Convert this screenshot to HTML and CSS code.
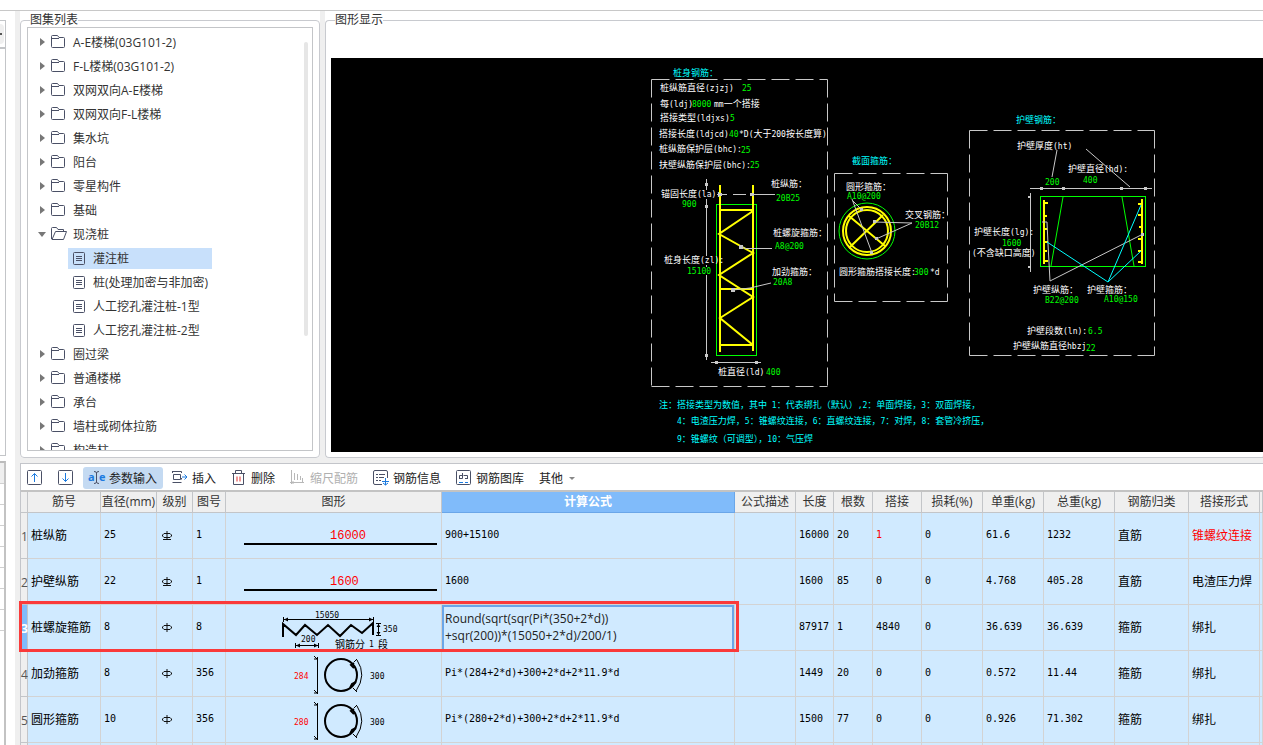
FILE: index.html
```html
<!DOCTYPE html>
<html lang="zh-CN">
<head>
    <meta charset="UTF-8">
    <meta name="viewport" content="width=device-width, initial-scale=1.0">
    <title>钢筋参数输入</title>
    <link rel="stylesheet" href="styles.css">
</head>
<body>
    <div class="topbar"></div>
    <div class="app">
        <aside class="dock">
            <div class="dock_head"><button class="dock_btn" aria-label="展开"></button></div>
            <div class="dock_body"></div>
            <div class="dock_grid">
                <i></i><i></i><i></i><i></i><i></i><i></i><i></i><i></i>
            </div>
        </aside>

        <main class="work">
            <div class="upper">
                <section class="panel list_panel">
                    <fieldset>
                        <legend>图集列表</legend>
                        <div class="tree_box">
                            <ul class="tree">
                                <li><button class="node"><svg class="folder"><use href="#i-folder"/></svg>A-E楼梯(03G101-2)</button></li>
                                <li><button class="node"><svg class="folder"><use href="#i-folder"/></svg>F-L楼梯(03G101-2)</button></li>
                                <li><button class="node"><svg class="folder"><use href="#i-folder"/></svg>双网双向A-E楼梯</button></li>
                                <li><button class="node"><svg class="folder"><use href="#i-folder"/></svg>双网双向F-L楼梯</button></li>
                                <li><button class="node"><svg class="folder"><use href="#i-folder"/></svg>集水坑</button></li>
                                <li><button class="node"><svg class="folder"><use href="#i-folder"/></svg>阳台</button></li>
                                <li><button class="node"><svg class="folder"><use href="#i-folder"/></svg>零星构件</button></li>
                                <li><button class="node"><svg class="folder"><use href="#i-folder"/></svg>基础</button></li>
                                <li>
                                    <button class="node open"><svg class="folder"><use href="#i-open"/></svg>现浇桩</button>
                                    <ul class="leaves">
                                        <li><button class="leaf selected"><svg><use href="#i-doc"/></svg>灌注桩</button></li>
                                        <li><button class="leaf"><svg><use href="#i-doc"/></svg>桩(处理加密与非加密)</button></li>
                                        <li><button class="leaf"><svg><use href="#i-doc"/></svg>人工挖孔灌注桩-1型</button></li>
                                        <li><button class="leaf"><svg><use href="#i-doc"/></svg>人工挖孔灌注桩-2型</button></li>
                                    </ul>
                                </li>
                                <li><button class="node"><svg class="folder"><use href="#i-folder"/></svg>圈过梁</button></li>
                                <li><button class="node"><svg class="folder"><use href="#i-folder"/></svg>普通楼梯</button></li>
                                <li><button class="node"><svg class="folder"><use href="#i-folder"/></svg>承台</button></li>
                                <li><button class="node"><svg class="folder"><use href="#i-folder"/></svg>墙柱或砌体拉筋</button></li>
                                <li><button class="node"><svg class="folder"><use href="#i-folder"/></svg>构造柱</button></li>
                            </ul>
                            <div class="scroll"></div>
                        </div>
                    </fieldset>
                </section>

                <section class="panel view_panel">
                    <fieldset>
                        <legend>图形显示</legend>
                        <div class="canvas">
                            <svg class="cad" viewBox="331 58 932 394">
                                <!-- 虚线框 -->
                                <g class="dash">
                                    <path d="M651.5 79.5H827.5M651.5 79.5V386.5M827.5 79.5V386.5M651.5 386.5H827.5"/>
                                    <path d="M834.5 173.5H947.5M834.5 173.5V301.5M947.5 173.5V301.5M834.5 301.5H947.5"/>
                                    <path d="M969.5 130.5H1154.5M969.5 130.5V355.5M1154.5 130.5V355.5M969.5 355.5H1154.5"/>
                                </g>

                                <!-- 桩身 -->
                                <g class="gl">
                                    <rect x="716.5" y="204.5" width="40" height="151"/>
                                </g>
                                <g class="yl">
                                    <path d="M720 185V352M753 185V351M720 210H753M720 289H753M720 345H753"/>
                                    <path d="M753 211L719 234L753 253L719 275L753 297L720 318L753 345"/>
                                </g>
                                <g class="wl">
                                    <path d="M706.5 179V190M706.5 199V256M706.5 265V267M706.5 275V360M711 362.5H761"/>
                                    <path d="M717 194.5H727M733 194.5H746M752 194.5H775M741 247L746 248.500H772M733 290L750 288L771 283"/>
                                </g>
                                <g class="dot">
                                    <path d="M705 183h3v3h-3zM705 205h3v3h-3zM705 354h3v3h-3zM715 361h3v3h-3zM755 361h3v3h-3zM718 193h4v3h-4zM750 193h4v3h-4zM739 245h4v4h-4zM731 288h4v4h-4z"/>
                                </g>
                                <g class="ct">
                                    <text x="673" y="76">桩身钢筋：</text>
                                </g>
                                <g class="wt">
                                    <text x="660" y="91">桩纵筋直径<tspan>(zjzj)</tspan></text>
                                    <text x="660" y="107">每<tspan>(ldj)</tspan></text>
                                    <text x="714" y="107"><tspan>mm</tspan>一个搭接</text>
                                    <text x="660" y="121">搭接类型<tspan>(ldjxs)</tspan></text>
                                    <text x="659" y="137">搭接长度<tspan>(ldjcd)</tspan></text>
                                    <text x="739" y="137"><tspan>*D(</tspan>大于<tspan>200</tspan>按长度算<tspan>)</tspan></text>
                                    <text x="659" y="152">桩纵筋保护层<tspan>(bhc):</tspan></text>
                                    <text x="659" y="168">扶壁纵筋保护层<tspan>(bhc):</tspan></text>
                                    <text x="661" y="197">锚固长度<tspan>(la):</tspan></text>
                                    <text x="771" y="187">桩纵筋：</text>
                                    <text x="773" y="236">桩螺旋箍筋：</text>
                                    <text x="772" y="275">加劲箍筋：</text>
                                    <text x="664" y="263">桩身长度<tspan>(zl):</tspan></text>
                                    <text x="718" y="375">桩直径<tspan>(ld)</tspan></text>
                                </g>
                                <g class="gt">
                                    <text x="742" y="91">25</text>
                                    <text x="692" y="107">8000</text>
                                    <text x="730" y="121">5</text>
                                    <text x="729" y="137">40</text>
                                    <text x="741" y="153">25</text>
                                    <text x="750" y="168">25</text>
                                    <text x="682" y="207">900</text>
                                    <text x="776" y="201">20B25</text>
                                    <text x="775" y="249">A8@200</text>
                                    <text x="773" y="285">20A8</text>
                                    <text x="687" y="274">15100</text>
                                    <text x="766" y="375">400</text>
                                </g>

                                <!-- 截面 -->
                                <circle class="gl" cx="867" cy="231" r="28"/>
                                <g class="yl">
                                    <circle cx="867" cy="231" r="24"/>
                                    <circle cx="867" cy="231" r="21"/>
                                    <path d="M849 216L885 246M849 248L883 215"/>
                                </g>
                                <g class="wl">
                                    <path d="M852 199L872 253M912 223L874 222M912 223L876 239M853 201L862 210"/>
                                </g>
                                <g class="dot">
                                    <path d="M860 208h3v3h-3zM873 220h3v3h-3zM875 237h3v3h-3zM870 251h3v3h-3z"/>
                                </g>
                                <text class="ct" x="852" y="164">截面箍筋：</text>
                                <g class="wt">
                                    <text x="846" y="190">圆形箍筋：</text>
                                    <text x="905" y="218">交叉钢筋：</text>
                                    <text x="839" y="275">圆形箍筋搭接长度<tspan>:</tspan></text>
                                    <text x="930" y="275"><tspan>*d</tspan></text>
                                </g>
                                <g class="gt">
                                    <text x="847" y="199">A10@200</text>
                                    <text x="915" y="228">20B12</text>
                                    <text x="914" y="275">300</text>
                                </g>

                                <!-- 护壁 -->
                                <g class="gl">
                                    <rect x="1040.5" y="196.500" width="105" height="70"/>
                                    <path d="M1063 197L1051 266M1122 197L1134 266"/>
                                </g>
                                <g class="yl">
                                    <path d="M1044 200V264M1142 199V264"/>
                                    <path d="M1044 203H1048M1044 216H1047M1044 229H1047M1044 242H1048M1044 251H1047M1044 261H1048"/>
                                    <path d="M1142 204H1138M1142 215H1138M1142 227H1139M1142 239H1138M1142 251H1138M1142 262H1138"/>
                                </g>
                                <g class="wl">
                                    <path d="M1030 188.5H1152M1030.5 193V272M1057 150L1052 177M1086 149L1130 187"/>
                                    <path d="M1042 222H1047L1048 244L1050 281L1143 234"/>
                                </g>
                                <g class="dot">
                                    <path d="M1040 187h3v3h-3zM1062 187h3v3h-3zM1120 187h3v3h-3zM1144 187h3v3h-3zM1028 196h3v2h-3zM1028 266h3v2h-3zM1141 233h3v3h-3z"/>
                                </g>
                                <path class="cl" d="M1047 242L1108 282L1141 205M1108 282L1141 251"/>
                                <text class="ct" x="1016" y="123">护壁钢筋：</text>
                                <g class="wt">
                                    <text x="1017" y="149">护壁厚度<tspan>(ht)</tspan></text>
                                    <text x="1068" y="172">护壁直径<tspan>(hd):</tspan></text>
                                    <text x="974" y="235">护壁长度<tspan>(lg):</tspan></text>
                                    <text x="972" y="256"><tspan>(</tspan>不含缺口高度<tspan>)</tspan></text>
                                    <text x="1033" y="293">护壁纵筋：</text>
                                    <text x="1087" y="293">护壁箍筋：</text>
                                    <text x="1027" y="334">护壁段数<tspan>(ln):</tspan></text>
                                    <text x="1013" y="349">护壁纵筋直径<tspan>hbzj</tspan></text>
                                </g>
                                <g class="gt">
                                    <text x="1045" y="185">200</text>
                                    <text x="1083" y="183">400</text>
                                    <text x="1002" y="246">1600</text>
                                    <text x="1045" y="303">B22@200</text>
                                    <text x="1104" y="302">A10@150</text>
                                    <text x="1088" y="334">6.5</text>
                                    <text x="1086" y="351">22</text>
                                </g>

                                <!-- 附注 -->
                                <g class="ct">
                                    <text x="659" y="408">注：搭接类型为数值，其中<tspan> 1</tspan>：代表绑扎（默认）<tspan>,2</tspan>：单面焊接，<tspan>3</tspan>：双面焊接，</text>
                                    <text x="677" y="424"><tspan>4</tspan>：电渣压力焊，<tspan>5</tspan>：锥螺纹连接，<tspan>6</tspan>：直螺纹连接，<tspan>7</tspan>：对焊，<tspan>8</tspan>：套管冷挤压，</text>
                                    <text x="677" y="442"><tspan>9</tspan>：锥螺纹（可调型），<tspan>10</tspan>：气压焊</text>
                                </g>
                            </svg>
                        </div>
                    </fieldset>
                </section>
            </div>

            <section class="lower">
                <div class="toolbar">
                    <button aria-label="上移"><svg viewBox="0 0 16 16"><rect class="ink" x="0.5" y="0.5" width="14" height="14" rx="1"/><path class="blue" d="M7.5 12V3.500M4.500 6.500L7.500 3.500L10.500 6.500"/></svg></button>
                    <button aria-label="下移"><svg viewBox="0 0 16 16"><rect class="ink" x="0.5" y="0.5" width="14" height="14" rx="1"/><path class="blue" d="M7.5 3V11.500M4.500 8.500L7.500 11.500L10.500 8.500"/></svg></button>
                    <button class="active"><svg viewBox="0 0 16 16"><text class="ae" x="-1" y="11">a</text><text class="ae" x="10" y="11">e</text><path class="ink" d="M5 1.500Q7.500 1.500 7.500 3V12Q7.500 13.500 5 13.500M10 1.500Q7.500 1.500 7.500 3M7.500 12Q7.500 13.500 10 13.500"/></svg>参数输入</button>
                    <button><svg viewBox="0 0 16 16"><path class="ink" d="M9.500 1.500H0.500M9.500 1.500V3M9.500 8V9.500M0.500 12.500H9.500M0.500 1V3M1.500 4.500H8.500V9.500H1.500Z"/><path class="blue" d="M10 7H15M12.500 4.500L15 7L12.500 9.500"/></svg>插入</button>
                    <button><svg viewBox="0 0 16 16"><path class="ink" d="M1 3.500H14M4.500 3V0.500H10.500V3M2.500 4V14.500H12.500V4"/><path class="red" d="M6 6.500V11.500M9 6.500V11.500"/></svg>删除</button>
                    <button disabled><svg viewBox="0 0 16 16"><path class="ink" d="M1.500 0V14M4.500 3V10M7.500 4V10M10.500 6V10M12.500 8V12M0 12.500H14M3 11V14"/></svg>缩尺配筋</button>
                    <button><svg viewBox="0 0 16 16"><path class="ink" d="M9 14.500H2Q0.500 14.500 0.500 13V2Q0.500 0.500 2 0.500H13Q14.500 0.500 14.500 2V8M3 4.500H5M6 4.500H12M3 7.500H5M6 7.500H11M3 10.500H5M6 10.500H8"/><path class="blue" d="M12.500 8V15M9 11.500H16M10 13L12.500 15L15 13"/></svg>钢筋信息</button>
                    <button><svg viewBox="0 0 16 16"><rect class="ink" x="0.5" y="0.5" width="14" height="14" rx="1"/><path class="ink" d="M3.500 8.500V5.500H7M6.500 3V8.500H3M7.500 5.500H11.500V9M9 8.500H11"/><path class="blue" d="M3 12.500H7M9 12.500H12"/></svg>钢筋图库</button>
                    <button>其他<span class="caret"></span></button>
                </div>

                <table class="bars">
                    <colgroup>
                        <col class="c_no"><col class="c_name"><col class="c_dia"><col class="c_grade"><col class="c_fig">
                        <col class="c_shape"><col><col class="c_desc"><col class="c_len"><col class="c_qty">
                        <col class="c_lap"><col class="c_kg"><col class="c_kg"><col class="c_sum"><col class="c_kind">
                        <col class="c_joint"><col class="c_end">
                    </colgroup>
                    <thead>
                        <tr>
                            <th></th><th>筋号</th><th>直径(mm)</th><th>级别</th><th>图号</th><th>图形</th>
                            <th class="current">计算公式</th><th>公式描述</th><th>长度</th><th>根数</th><th>搭接</th>
                            <th>损耗(%)</th><th>单重(kg)</th><th>总重(kg)</th><th>钢筋归类</th><th>搭接形式</th><th></th>
                        </tr>
                    </thead>
                    <tbody>
                        <tr>
                            <th>1</th><td class="cn">桩纵筋</td><td>25</td>
                            <td><svg class="grade"><use href="#i-grade2"/></svg></td><td>1</td>
                            <td class="shape"><svg viewBox="0 0 215 45"><text class="big" x="104" y="26">16000</text><path class="bar" d="M18 31H211"/></svg></td>
                            <td>900+15100</td><td></td><td>16000</td><td>20</td><td class="warn">1</td><td>0</td><td>61.6</td><td>1232</td>
                            <td class="cn">直筋</td><td class="cn warn">锥螺纹连接</td><td></td>
                        </tr>
                        <tr>
                            <th>2</th><td class="cn">护壁纵筋</td><td>22</td>
                            <td><svg class="grade"><use href="#i-grade2"/></svg></td><td>1</td>
                            <td class="shape"><svg viewBox="0 0 215 45"><text class="big" x="104" y="26">1600</text><path class="bar" d="M18 31H211"/></svg></td>
                            <td>1600</td><td></td><td>1600</td><td>85</td><td>0</td><td>0</td><td>4.768</td><td>405.28</td>
                            <td class="cn">直筋</td><td class="cn">电渣压力焊</td><td></td>
                        </tr>
                        <tr class="editing">
                            <th>3<span class="mark"></span></th><td class="cn">桩螺旋箍筋</td><td>8</td>
                            <td><svg class="grade"><use href="#i-grade1"/></svg></td><td>8</td>
                            <td class="shape">
                                <svg viewBox="0 0 215 45">
                                    <path class="bar" d="M57 32V19L70 30L79 20L91 30L102 20L114 31L125 20L136 28L147 18V30"/>
                                    <path class="dim" d="M57.500 12V17M147.500 12V17M58 14.500H147M150 18.500H155M150 30.500H155M152.500 18V31M69.500 38V43M92.500 38V43M70 40.500H92"/>
                                    <path d="M58 14.500l4-2v4zM147 14.500l-4-2v4zM70 40.500l4-2v4zM92 40.500l-4-2v4zM152.500 19l2 3h-4zM152.500 30l2-3h-4z"/>
                                    <text x="89" y="13">15050</text>
                                    <text x="157" y="27">350</text>
                                    <text x="75" y="37">200</text>
                                    <text class="zh" x="109" y="43">钢筋分</text>
                                    <text x="143" y="42">1</text>
                                    <text class="zh" x="152" y="43">段</text>
                                </svg>
                            </td>
                            <td class="edit"><textarea aria-label="计算公式" spellcheck="false">Round(sqrt(sqr(Pi*(350+2*d))
+sqr(200))*(15050+2*d)/200/1)</textarea></td>
                            <td></td><td>87917</td><td>1</td><td>4840</td><td>0</td><td>36.639</td><td>36.639</td>
                            <td class="cn">箍筋</td><td class="cn">绑扎</td><td></td>
                        </tr>
                        <tr>
                            <th>4</th><td class="cn">加劲箍筋</td><td>8</td>
                            <td><svg class="grade"><use href="#i-grade1"/></svg></td><td>356</td>
                            <td class="shape"><svg viewBox="0 0 215 45"><use href="#i-hoop" width="215" height="45"/><text class="warn" x="68" y="28">284</text><text x="144" y="28">300</text></svg></td>
                            <td>Pi*(284+2*d)+300+2*d+2*11.9*d</td><td></td><td>1449</td><td>20</td><td>0</td><td>0</td><td>0.572</td><td>11.44</td>
                            <td class="cn">箍筋</td><td class="cn">绑扎</td><td></td>
                        </tr>
                        <tr>
                            <th>5</th><td class="cn">圆形箍筋</td><td>10</td>
                            <td><svg class="grade"><use href="#i-grade1"/></svg></td><td>356</td>
                            <td class="shape"><svg viewBox="0 0 215 45"><use href="#i-hoop" width="215" height="45"/><text class="warn" x="68" y="28">280</text><text x="144" y="28">300</text></svg></td>
                            <td>Pi*(280+2*d)+300+2*d+2*11.9*d</td><td></td><td>1500</td><td>77</td><td>0</td><td>0</td><td>0.926</td><td>71.302</td>
                            <td class="cn">箍筋</td><td class="cn">绑扎</td><td></td>
                        </tr>
                        <tr class="blank">
                            <th></th><td></td><td></td><td></td><td></td><td></td><td></td><td></td><td></td>
                            <td></td><td></td><td></td><td></td><td></td><td></td><td></td><td></td>
                        </tr>
                    </tbody>
                </table>
            </section>
        </main>
    </div>

    <svg class="defs">
        <symbol id="i-folder" viewBox="0 0 16 14"><path class="ink" d="M0.500 11.500V1.500Q0.500 0.500 1.500 0.500H6.500L8 2.500H12.500Q13.500 2.500 13.500 3.500V11.500Q13.500 12.500 12.500 12.500H1.500Q0.500 12.500 0.500 11.500M0.500 3.500H8"/></symbol>
        <symbol id="i-open" viewBox="0 0 16 14"><path class="ink" d="M0.500 12V1.500Q0.500 0.500 1.500 0.500H5.500L7 2.500H12.500V4.500M1 12.500L4.500 4.500H15.500L12.500 12.500Z"/></symbol>
        <symbol id="i-doc" viewBox="0 0 13 13"><rect class="ink" x="0.500" y="0.500" width="11" height="12" rx="1"/><path class="ink" d="M3 4.500H9M3 6.500H9M3 8.500H9"/></symbol>
        <symbol id="i-grade1" viewBox="0 0 10 10"><path class="dark" d="M2 2.500H8L9.500 4V5L8 6.500H2L0.500 5V4ZM5 0V9"/></symbol>
        <symbol id="i-grade2" viewBox="0 0 10 10"><path class="dark" d="M2 2.500H8L9.500 4V5L8 6.500H2L0.500 5V4ZM5 0V9M1 8.500H9"/></symbol>
        <symbol id="i-hoop" viewBox="0 0 215 45">
            <circle class="bar" cx="115" cy="24" r="16"/>
            <path class="dim" d="M91.500 6V43M88 5L91.500 8.500M91.500 8H88M88 39L91.500 42.500M91.500 42H88M131 9Q141 24 130 40M128 11L131 8M127 37L131 41"/>
            <path class="bar" d="M128 17L125 14L128 12M130 31L126 33L124 37"/>
        </symbol>
    </svg>
</body>
</html>
```
FILE: styles.css
```css
* {
    box-sizing: border-box;
}
body {
    margin: 0;
    height: 100vh;
    overflow: hidden;
    display: flex;
    flex-direction: column;
    background-color: #fff;
    color: #333;
    font-family: "Open Sans", "Noto Sans CJK SC", sans-serif;
    font-size: 12px;
}
button {
    margin: 0;
    padding: 0;
    border: 0;
    background: none;
    color: inherit;
    font: inherit;
    white-space: nowrap;
}
ul {
    margin: 0;
    padding: 0;
    list-style: none;
}
.topbar {
    flex: none;
    height: 11px;
    border-bottom: 1px solid #c8c8c8;
}
.app {
    flex: 1;
    min-height: 0;
    display: flex;
}

/* 左侧停靠栏 */
.dock {
    flex: none;
    width: 15px;
    padding-top: 9px;
    display: flex;
    flex-direction: column;
}
.dock_head {
    width: 6px;
    height: 29px;
    padding: 3px 1px 3px 0;
    border: 1px solid #c3c5c8;
    border-left: 0;
    border-bottom-width: 2px;
}
.dock_btn {
    display: block;
    width: 4px;
    height: 20px;
    border-radius: 0 4px 4px 0;
    background: linear-gradient(#555, #555) no-repeat 0 9px / 2px 2px #efefef;
}
.dock_body {
    width: 6px;
    height: 407px;
    border-right: 1px solid #c3c5c8;
    border-bottom: 1px solid #c3c5c8;
}
.dock_grid {
    flex: 1;
    width: 6px;
    margin-top: 5px;
    border-top: 2px solid #bbb;
    border-right: 2px solid #c3c3c3;
}
.dock_grid i {
    display: block;
    height: 21px;
    border-bottom: 1px solid #d0d0d0;
}
.dock_grid i:first-child {
    background-color: #efefef;
}

.work {
    flex: 1;
    min-width: 0;
    padding-left: 5px;
    display: flex;
    flex-direction: column;
    gap: 5px;
    background-color: #efefef;
}
.upper {
    flex: 0 0 60vh;
    min-height: 0;
    display: flex;
    gap: 5px;
}
.panel {
    display: flex;
    min-height: 0;
    padding-top: 2px;
    border-radius: 0 0 4px 4px;
    background-color: #fff;
}
.list_panel {
    flex: none;
    width: 300px;
}
.view_panel {
    flex: 1;
    min-width: 0;
}
fieldset {
    flex: 1;
    min-width: 0;
    min-height: 0;
    margin: 0;
    padding: 0 6px 6px;
    border: 1px solid #c8cacf;
    border-radius: 4px;
    display: flex;
}
legend {
    margin-left: 3px;
    padding: 0;
    line-height: 14px;
}
.view_panel fieldset {
    padding: 31px 0 5px 5px;
    border-right: 0;
    border-radius: 4px 0 0 4px;
}
.view_panel legend {
    margin-left: 4px;
}

/* 图集树 */
.tree_box {
    flex: 1;
    min-width: 0;
    padding: 2px 4px 0 0;
    border: 1px solid #c3c5c8;
    display: flex;
    overflow: hidden;
}
.tree {
    flex: 1;
}
.tree li {
    min-height: 24px;
}
.tree svg {
    flex: none;
}
.node {
    display: flex;
    align-items: center;
    height: 24px;
    padding-left: 12px;
}
.node::before {
    content: "";
    width: 0;
    margin-right: 6px;
    border: solid transparent;
    border-width: 4px 0 4px 5px;
    border-left-color: #777;
}
.node.open::before {
    margin-left: -2px;
    margin-right: 5px;
    border-width: 5px 4px 0;
    border-color: #777 transparent;
}
.folder {
    width: 16px;
    height: 14px;
    margin-right: 6px;
}
.leaves {
    width: fit-content;
    margin-left: 40px;
}
.leaves li {
    display: flex;
    align-items: center;
}
.leaf {
    flex: 1;
    display: flex;
    align-items: center;
    height: 21px;
    padding: 0 4px 0 5px;
}
.leaf svg {
    width: 13px;
    height: 13px;
    margin-right: 7px;
}
.leaf.selected {
    background-color: #c8e0fb;
}
.leaf.selected .ink {
    stroke: #2f5f98;
}
.scroll {
    width: 4px;
    height: 70%;
    margin-top: 12px;
    border-radius: 2px;
    background-color: #e6e6e6;
}

/* 图形显示 */
.canvas {
    flex: 1;
    min-width: 0;
    min-height: 0;
    display: flex;
    background-color: #000;
}
.cad {
    width: 100%;
    height: 100%;
    fill: none;
}
.cad text {
    font-family: "Noto Sans CJK SC", sans-serif;
    font-size: 9px;
    white-space: pre;
}
.cad tspan,
.cad .gt text {
    font-family: "DejaVu Sans Mono", monospace;
    font-size: 8px;
}
.dash {
    stroke: #c8c8c8;
    stroke-dasharray: 18 6;
}
.gl {
    stroke: #00ff00;
}
.yl {
    stroke: #ffff00;
    stroke-width: 2px;
}
.wl {
    stroke: #c8c8c8;
}
.cl {
    stroke: #00ffff;
}
.dot {
    fill: #c8c8c8;
}
.wt {
    fill: #fff;
}
.gt {
    fill: #00ff00;
}
.ct {
    fill: #00ffff;
}

/* 工具栏 */
.lower {
    flex: 1;
    min-width: 0;
    min-height: 0;
    border-top: 1px solid #c3c5ca;
    border-left: 1px solid #c3c5ca;
    background-color: #fff;
}
.toolbar {
    height: 28px;
    padding-top: 3px;
    border-bottom: 2px solid #c3c3c3;
    display: flex;
    align-items: flex-start;
    gap: 3px;
}
.toolbar button {
    display: flex;
    align-items: center;
    gap: 4px;
    height: 22px;
    padding: 0 6px;
    border-radius: 3px;
    color: #222;
}
.toolbar svg {
    width: 16px;
    height: 16px;
    overflow: visible;
}
.toolbar .active {
    background-color: #c4daf2;
}
.toolbar button:disabled {
    color: #b0b0b0;
}
.toolbar button:disabled .ink {
    stroke: #b8b8b8;
}
.caret {
    margin-left: 2px;
    border: solid transparent;
    border-width: 3px 3px 0;
    border-top-color: #888;
}
.ink {
    fill: none;
    stroke: #4a5066;
}
.blue {
    fill: none;
    stroke: #1c7be0;
}
.red {
    fill: none;
    stroke: #e03030;
}
.dark {
    fill: none;
    stroke: #111;
}
.ae {
    fill: #1c7be0;
    font-size: 11px;
    font-weight: bold;
}
.defs {
    position: absolute;
    width: 0;
    height: 0;
}

/* 钢筋表 */
.bars {
    width: 100%;
    table-layout: fixed;
    border-collapse: separate;
    border-spacing: 0;
}
.c_no { width: 7px; }
.c_name { width: 73px; }
.c_dia { width: 56px; }
.c_grade { width: 36px; }
.c_fig { width: 33px; }
.c_shape { width: 216px; }
.c_desc { width: 61px; }
.c_len { width: 38px; }
.c_qty { width: 39px; }
.c_lap { width: 49px; }
.c_kg { width: 61px; }
.c_sum { width: 71px; }
.c_kind { width: 74px; }
.c_joint { width: 71px; }
.c_end { width: 3px; }
.bars th {
    height: 21px;
    padding: 0;
    border-right: 1px solid #c3c5c8;
    border-bottom: 1px solid #c3c5c8;
    background-color: #efefef;
    font-weight: normal;
    line-height: 16px;
    white-space: nowrap;
}
.bars th.current {
    border-color: #6aa6e8;
    background-color: #80bbfa;
    color: #fff;
    font-weight: bold;
}
.bars td {
    height: 46px;
    padding: 0 0 2px 3px;
    border-right: 1px solid #d3d3d3;
    border-bottom: 1px solid #d3d3d3;
    background-color: #d0eaff;
    color: #000;
    font-family: "DejaVu Sans Mono", monospace;
    font-size: 10px;
    white-space: nowrap;
}
.bars td.cn {
    font-family: "Noto Sans CJK SC", sans-serif;
    font-size: 12px;
}
.bars .blank td {
    height: 2px;
    padding: 0;
    border-bottom: 0;
}
.bars .blank th {
    height: 2px;
    border-bottom: 0;
}
.bars .warn {
    color: #ff0000;
    fill: #ff0000;
}
.bars tbody th {
    padding-top: 2px;
    color: #555;
    text-align: left;
}
.bars .editing {
    position: relative;
}
.bars .editing th {
    background-color: #80bbfa;
    color: #fff;
    font-weight: bold;
}
.grade {
    display: block;
    width: 10px;
    height: 10px;
    margin: 3px 0 0 2px;
}
.bars td.shape,
.bars td.edit {
    padding: 0;
}
.shape svg {
    display: block;
    width: 100%;
    height: 45px;
}
.shape text {
    font-size: 8px;
}
.shape .big {
    fill: #ff0000;
    font-family: "Liberation Mono", monospace;
    font-size: 12px;
}
.shape .zh {
    font-family: "Noto Sans CJK SC", sans-serif;
    font-size: 10px;
}
.bar {
    fill: none;
    stroke: #000;
    stroke-width: 2px;
}
.dim {
    fill: none;
    stroke: #000;
}
.edit textarea {
    display: block;
    width: 100%;
    height: 46px;
    margin-bottom: -1px;
    padding: 3px 1px;
    border: 2px solid #6aa6e8;
    outline: 0;
    background: none;
    color: #222;
    font-family: "Open Sans", "Noto Sans CJK SC", sans-serif;
    font-size: 12px;
    line-height: 17px;
    resize: none;
    overflow: hidden;
}
/* 当前行红框，到计算公式列为止 */
.mark {
    position: absolute;
    z-index: 1;
    top: -4px;
    right: 524px;
    bottom: -1px;
    left: -2px;
    border: 3px solid #fa3a3a;
    pointer-events: none;
}
```
